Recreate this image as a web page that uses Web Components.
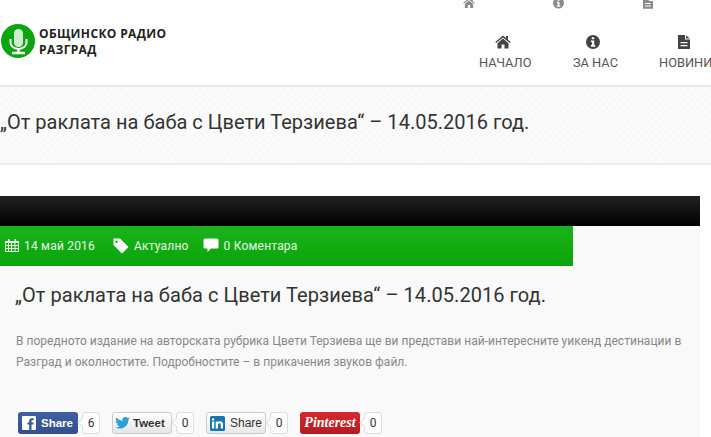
<!DOCTYPE html>
<html><head><meta charset="utf-8"><style>
html,body{margin:0;padding:0;background:#fff;width:711px;height:437px;overflow:hidden}
body{font-family:"Liberation Sans",Arial,sans-serif}
</style></head><body>

<template id="t-header"><style>
:host{display:block;height:85px;border-bottom:2px solid #e8e8e8;overflow:hidden;background:#fff}
.wrap{display:flex;justify-content:space-between;height:85px}
.logo{display:flex;align-items:flex-start;padding:24px 0 0 1px}
.txt{margin:2px 0 0 4px;font:bold 12px/16px "Open Sans","DejaVu Sans",sans-serif;color:#222;letter-spacing:.35px}
.nav{width:248px;flex:none;margin-right:-15px;display:flex;flex-direction:column;margin-top:-3px}
.row{display:grid;grid-template-columns:88px 90px 70px}
.top{height:14px;color:#8a8a8a;justify-items:start;margin-left:-14px}
.top svg{display:block}
.main{margin-top:24px;color:#444}
.it{display:flex;flex-direction:column;align-items:center;width:max-content;font:12.800px/14px Roboto,sans-serif;color:#555;white-space:nowrap}
.it svg{height:14px;margin:0 4px 7px 0;display:block;color:#444}
</style>
<svg width="0" height="0" style="position:absolute"><defs>
<symbol id="home" viewBox="0 0 16 14"><path fill="currentColor" d="M8 0.500 L0.300 7 L1.200 8.100 L8 2.500 L14.800 8.100 L15.700 7 L13 4.700 V1 H11 V3 Z M8 3.600 L2.500 8.200 V13.500 H6.500 V9.500 H9.500 V13.500 H13.500 V8.200 Z"/></symbol>
<symbol id="info" viewBox="0 0 14 14"><path fill="currentColor" fill-rule="evenodd" d="M7 0a7 7 0 1 0 0 14A7 7 0 0 0 7 0Z M5.800 2.200h2.400v2H5.800Z M4.900 5.400h3.300v4.700h1v1.700H4.900v-1.700h1V7.100h-1Z"/></symbol>
<symbol id="file" viewBox="0 0 12 14"><path fill="currentColor" fill-rule="evenodd" d="M0 0H7V4.500H12V14H0Z M8 0.200L11.800 3.500H8Z M2.500 7V8.300H9.500V7Z M2.500 10V11.300H9.500V10Z"/></symbol>
</defs></svg>
<div class="wrap"><div class="logo">
<svg width="34" height="34" viewBox="0 0 34 34"><circle cx="17" cy="17" r="17" fill="#0aa50f"/><rect x="13" y="5" width="9" height="18" rx="4.500" fill="#cfeccf"/><path d="M9.500 15v3.500a8 6.500 0 0 0 16 0V15" fill="none" stroke="#fff" stroke-width="2"/><path d="M17.500 25v3M11 29h13" stroke="#fff" stroke-width="2.500" fill="none"/></svg>
<div class="txt">ОБЩИНСКО РАДИО<br>РАЗГРАД</div></div>
<div class="nav"><div class="row top">
<svg style="margin-left:-1px" width="12" height="12"><use href="#home"/></svg><svg style="margin-left:1px" width="11" height="12"><use href="#info"/></svg><svg style="margin-left:1px" width="10" height="12"><use href="#file"/></svg></div>
<div class="row main"><div class="it" style="margin-left:1px"><svg width="16"><use href="#home"/></svg>НАЧАЛО</div><div class="it" style="margin-left:7px"><svg width="14"><use href="#info"/></svg>ЗА НАС</div><div class="it" style="margin-left:3px"><svg width="12"><use href="#file"/></svg>НОВИНИ</div></div>
</div></div></template>

<template id="t-band"><style>
:host{display:block;height:76px;background-color:#f8f8f8;background-image:repeating-linear-gradient(45deg,#fcfcfc 0 1px,transparent 1px 5px),repeating-linear-gradient(-45deg,#fcfcfc 0 1px,transparent 1px 5px);border-bottom:2px solid #ececec}
h1{margin:0;padding:24px 0 0 0;font:400 20px/22px Roboto,sans-serif;color:#333;white-space:nowrap;letter-spacing:.02px}
</style><h1><slot></slot></h1></template>

<template id="t-meta"><style>
:host{display:flex;align-items:center;width:573px;height:40px;background:linear-gradient(#1bb31b,#0aa50a);color:#e6f8e6;font:12px/14px Roboto,sans-serif;box-sizing:border-box;padding:0 0 1px 5px;white-space:nowrap;letter-spacing:.2px}
svg{display:block;flex:none}
span{display:flex;align-items:center}
</style>
<span><svg width="14" height="13" viewBox="0 0 14 13"><path fill="#eaf8ea" fill-rule="evenodd" d="M0 2H3V0H4.500V2H9.500V0H11V2H14V13H0Z M1 4V6H3V4Z M4 4V6H6V4Z M7 4V6H9.500V4Z M10.500 4V6H13V4Z M1 7V9H3V7Z M4 7V9H6V7Z M7 7V9H9.500V7Z M10.500 7V9H13V7Z M1 10V12H3V10Z M4 10V12H6V10Z M7 10V12H9.500V10Z M10.500 10V12H13V10Z"/></svg><span style="margin-left:5px">14 май 2016</span></span>
<span style="margin-left:18px"><svg width="16" height="16" viewBox="0 0 16 16"><path fill="#fff" fill-rule="evenodd" d="M0.500 0.500H7L15.500 9L9 15.500L0.500 7Z M3.500 2.500a1.200 1.200 0 1 0 .01 0Z"/></svg><span style="margin-left:5px">Актуално</span></span>
<span style="margin-left:14px"><svg width="16" height="15" viewBox="0 0 16 15"><path fill="#fff" d="M2 0.500H14a1.500 1.500 0 0 1 1.500 1.500V9a1.500 1.500 0 0 1-1.500 1.500H8L4.500 14V10.500H2A1.500 1.500 0 0 1 .5 9V2A1.500 1.500 0 0 1 2 .5Z"/></svg><span style="margin-left:5px">0 Коментара</span></span>
</template>

<template id="t-count"><style>
:host{display:inline-flex;align-items:center;justify-content:center;position:relative;box-sizing:border-box;width:18px;height:22px;margin-left:4px;background:#fff;border:1px solid #ddd;border-radius:3px;font:12px/14px Roboto,sans-serif;color:#333}
:host::before{content:"";position:absolute;left:-4px;top:6px;width:6px;height:6px;background:#fff;border-left:1px solid #ddd;border-bottom:1px solid #ddd;transform:rotate(45deg)}
span{position:relative}
</style><span><slot></slot></span></template>

<template id="t-btn"><style>
:host{display:inline-flex;align-items:center;box-sizing:border-box;height:22px;border-radius:3px;font:bold 11.500px/14px "Liberation Sans",sans-serif;white-space:nowrap}
:host([kind=fb]){background:linear-gradient(#3f5f9f,#31508d);color:#fff;width:60px;padding-left:4px}
:host([kind=tw]){background:linear-gradient(#fff,#e6e6e6);border:1px solid #ccc;color:#333;width:60px;padding-left:2px}
:host([kind=in]){background:linear-gradient(#fff,#e9e9e9);border:1px solid #ccc;color:#333;width:60px;padding-left:3px;font-weight:400;font-size:12px}
:host([kind=pin]){background:linear-gradient(#d42a30,#b31b20);color:#fff;width:60px;justify-content:center;font:italic bold 14px/14px "Liberation Serif",serif}
</style><slot name="i"></slot><slot></slot></template>

<template id="t-share"><style>
:host{display:flex;align-items:center;padding-left:18px;height:22px}
::slotted(.gap){width:12px;flex:none}
</style><slot></slot></template>

<template id="t-post"><style>
:host{display:block;width:700px;margin-top:31px;background:#f9f9f9;height:241px}
.bar{height:30px;background:linear-gradient(#222,#000);}
h2{margin:0;padding:17px 0 0 15px;font:400 20px/24px Roboto,sans-serif;color:#333;white-space:nowrap;letter-spacing:.05px}
p{margin:0;padding:24px 0 0 16px;font:12px/21px Roboto,sans-serif;color:#888;white-space:nowrap;letter-spacing:.02px}
.sh{margin-top:39px}
</style><div class="bar"></div><slot name="meta"></slot><h2><slot name="title"></slot></h2><p><slot name="text"></slot></p><div class="sh"><slot name="share"></slot></div></template>

<site-header></site-header>
<title-band>„От раклата на баба с Цвети Терзиева“ – 14.05.2016 год.</title-band>
<post-card>
<post-meta slot="meta"></post-meta>
<span slot="title">„От раклата на баба с Цвети Терзиева“ – 14.05.2016 год.</span>
<span slot="text">В поредното издание на авторската рубрика Цвети Терзиева ще ви представи най-интересните уикенд дестинации в<br>Разград и околностите. Подробностите – в прикачения звуков файл.</span>
<share-row slot="share">
<share-btn kind="fb"><svg slot="i" width="14" height="14" viewBox="0 0 14 14" style="margin-right:5px;display:block"><rect width="14" height="14" rx="1" fill="#fff"/><path fill="#38578f" d="M9.500 14V8.600H11.300L11.600 6.500H9.500V5.200C9.500 4.600 9.700 4.200 10.500 4.200H11.700V2.300C11.400 2.300 10.800 2.200 10 2.200C8.300 2.200 7.200 3.200 7.200 5V6.500H5.400V8.600H7.200V14Z"/></svg>Share</share-btn><share-count>6</share-count><i class="gap"></i>
<share-btn kind="tw"><svg slot="i" width="15" height="12" viewBox="0 0 15 12" style="margin-right:3px;display:block"><path fill="#2a9fd8" d="M15 1.500c-.5.300-1.100.400-1.700.500.6-.4 1.100-1 1.300-1.700-.6.300-1.200.6-1.900.7A3 3 0 0 0 7.500 3.700C5 3.600 2.800 2.400 1.300.5.500 1.900.9 3.600 2.200 4.500c-.5 0-1-.1-1.400-.4 0 1.500 1 2.700 2.400 3-.4.100-.9.100-1.300 0 .4 1.200 1.500 2 2.800 2.100A6 6 0 0 1 .2 10.500c5.900 3 13.300-.5 13.200-7.900.6-.3 1.100-.7 1.600-1.100Z"/></svg>Tweet</share-btn><share-count>0</share-count><i class="gap"></i>
<share-btn kind="in"><svg slot="i" width="15" height="15" viewBox="0 0 15 15" style="margin-right:5px;display:block"><rect width="15" height="15" rx="1.500" fill="#1477b0"/><path fill="#fff" d="M2 5.500H4.200V12.500H2Z M3.100 2.200a1.200 1.200 0 1 1 0 2.400a1.200 1.200 0 0 1 0-2.400Z M5.700 5.500H7.800V6.500C8.200 5.800 9 5.300 10 5.300C12 5.300 13 6.500 13 8.500V12.500H10.800V9C10.800 8 10.400 7.300 9.500 7.300C8.500 7.300 8 8 8 9V12.500H5.700Z"/></svg>Share</share-btn><share-count>0</share-count><i class="gap"></i>
<share-btn kind="pin">Pinterest</share-btn><share-count>0</share-count>
</share-row>
</post-card>

<script>
function reg(name,tid){customElements.define(name,class extends HTMLElement{constructor(){super();this.attachShadow({mode:"open"}).appendChild(document.getElementById(tid).content.cloneNode(true));}});}
reg("site-header","t-header");reg("title-band","t-band");reg("post-meta","t-meta");reg("share-count","t-count");reg("share-btn","t-btn");reg("share-row","t-share");reg("post-card","t-post");
</script>
</body></html>
